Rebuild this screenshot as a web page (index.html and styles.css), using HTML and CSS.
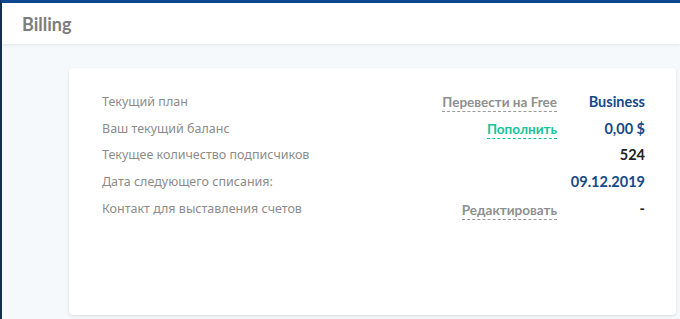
FILE: index.html
```html
<!DOCTYPE html>
<html lang="ru">
<head>
    <meta charset="UTF-8">
    <meta name="viewport" content="width=device-width, initial-scale=1.0">
    <title>Billing</title>
    <link rel="stylesheet" href="styles.css">
</head>
<body>

    <header class="page-header">
        <h1>Billing</h1>
    </header>

    <main class="content">
        <section class="card">
            <div class="row">
                <span class="label">Текущий план</span>
                <span class="action"><a class="link">Перевести на Free</a></span>
                <span class="value">Business</span>
            </div>
            <div class="row">
                <span class="label">Ваш текущий баланс</span>
                <span class="action"><a class="link link-green">Пополнить</a></span>
                <span class="value">0,00 $</span>
            </div>
            <div class="row">
                <span class="label">Текущее количество подписчиков</span>
                <span class="action"></span>
                <span class="value value-dark">524</span>
            </div>
            <div class="row">
                <span class="label">Дата следующего списания:</span>
                <span class="action"></span>
                <span class="value">09.12.2019</span>
            </div>
            <div class="row">
                <span class="label">Контакт для выставления счетов</span>
                <span class="action"><a class="link">Редактировать</a></span>
                <span class="value value-dark">-</span>
            </div>
        </section>
    </main>

</body>
</html>
```

FILE: styles.css
```css
/* General Styling */
body {
    margin: 0;
    height: 316px;
    background: #f5f9fc;
    border-top: 3px solid #0c4790;
    border-left: 2px solid #14304e;
    font-family: 'Noto Sans', 'Open Sans', sans-serif;
}

.page-header {
    background: #fff;
    height: 41px;
    padding-left: 20px;
    display: flex;
    align-items: center;
    box-shadow: 0 1px 3px rgba(0, 0, 0, 0.08);
}

.page-header h1 {
    margin: 0;
    font-family: 'Lato', sans-serif;
    font-size: 18px;
    font-weight: bold;
    color: #7d7d7d;
}

.content {
    padding: 24px 4px 0 67px;
}

.card {
    background: #fff;
    border-radius: 4px;
    box-shadow: 0 1px 3px rgba(0, 0, 0, 0.12);
    height: 247px;
    padding: 20px 31px 0 33px;
    box-sizing: border-box;
}

.row {
    display: grid;
    grid-template-columns: 1fr auto 88px;
    align-items: center;
    height: 26.8px;
}

.label {
    font-size: 12.5px;
    color: #8c8c8c;
}

.action {
    text-align: right;
}

.link {
    font-family: 'Lato', sans-serif;
    font-size: 13.5px;
    font-weight: bold;
    color: #8f8f8f;
    border-bottom: 1px dashed #9a9a9a;
    padding-bottom: 1px;
}

.link-green {
    color: #17c39a;
    border-bottom-color: #17c39a;
}

.value {
    text-align: right;
    font-family: 'Lato', sans-serif;
    font-size: 14.5px;
    font-weight: bold;
    color: #14498a;
}

.value-dark {
    color: #222;
}
```
